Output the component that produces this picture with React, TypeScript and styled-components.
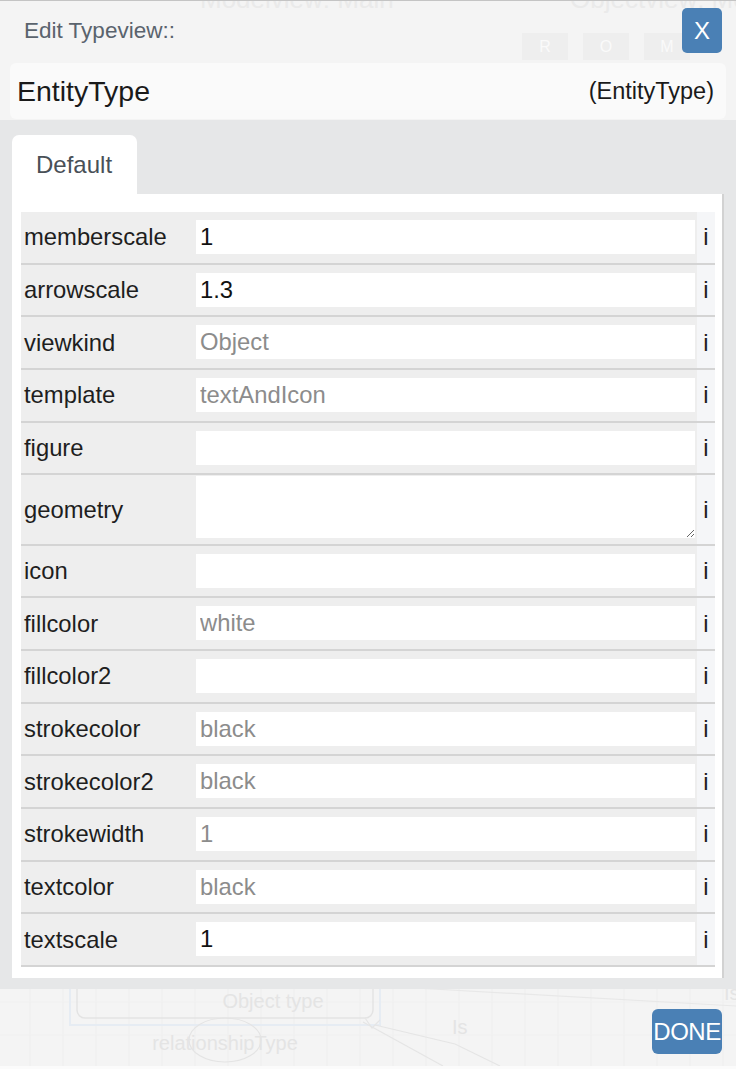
import React from "react";
import styled, { createGlobalStyle } from "styled-components";

const GlobalStyle = createGlobalStyle`
  html, body {
    margin: 0;
    padding: 0;
    width: 736px;
    height: 1069px;
    overflow: hidden;
    background: #f4f4f4;
    font-family: "Liberation Sans", Arial, Helvetica, sans-serif;
  }
  * { box-sizing: border-box; }
`;

const Page = styled.div`
  position: relative;
  width: 736px;
  height: 1069px;
  overflow: hidden;
  background: #f4f4f4;
  border-top: 1px solid #c4c4c4;
`;

/* ---------- faded application behind the dialog ---------- */
const Backdrop = styled.div`
  position: absolute;
  inset: 0;
  pointer-events: none;
`;

const FaintTitle = styled.div<{ $left: number }>`
  position: absolute;
  top: -17px;
  left: ${(p) => p.$left}px;
  font-size: 26px;
  color: #eaeaea;
  white-space: nowrap;
`;

const FaintButtons = styled.div`
  position: absolute;
  top: 32px;
  left: 522px;
  display: flex;
  gap: 15px;
`;

const FaintButton = styled.div`
  width: 46px;
  height: 27px;
  background: #eeeeee;
  color: #fafafa;
  font-size: 16px;
  display: flex;
  align-items: center;
  justify-content: center;
`;

const FaintCanvas = styled.svg`
  position: absolute;
  left: 0;
  bottom: 0;
  width: 736px;
  height: 110px;
`;

/* ---------- dialog ---------- */
const Modal = styled.div`
  position: absolute;
  inset: 0;
  display: flex;
  flex-direction: column;
`;

const Header = styled.div`
  height: 62px;
  display: flex;
  justify-content: space-between;
  align-items: flex-start;
  padding: 0 14px 0 24px;
`;

const Title = styled.div`
  margin-top: 17px;
  font-size: 22.5px;
  line-height: 26px;
  color: #5a636d;
`;

const CloseButton = styled.button`
  margin-top: 7px;
  width: 40px;
  height: 45px;
  border: none;
  border-radius: 5px;
  background: #4a80b5;
  color: #ffffff;
  font-family: inherit;
  font-size: 24px;
  padding: 0;
  display: flex;
  align-items: center;
  justify-content: center;
`;

const NameBar = styled.div`
  margin: 0 10px;
  height: 56px;
  background: #fafafa;
  border-radius: 6px;
  display: flex;
  align-items: center;
  justify-content: space-between;
  padding: 0 12px 0 7px;
`;

const NameMain = styled.div`
  font-size: 28.5px;
  color: #1a1a1a;
`;

const NameType = styled.div`
  font-size: 23.5px;
  color: #1a1a1a;
`;

const Body = styled.div`
  margin-top: 1px;
  background: #e6e7e8;
  padding: 15px 10px 11px 12px;
  display: flex;
  flex-direction: column;
`;

const TabList = styled.div`
  display: flex;
`;

const Tab = styled.div`
  width: 125px;
  height: 59px;
  background: #ffffff;
  border-radius: 7px 7px 0 0;
  padding-left: 24px;
  display: flex;
  align-items: center;
  font-size: 24px;
  color: #495057;
`;

const TabPanel = styled.div`
  width: 712px;
  background: #ffffff;
  border-right: 2px solid #d2d2d2;
  padding: 18px 7px 11px 9px;
`;

const PropTable = styled.div`
  display: flex;
  flex-direction: column;
`;

const Row = styled.div`
  display: flex;
  background: #eeeeee;
  border-bottom: 2px solid #d4d4d4;
`;

const Label = styled.div`
  width: 175px;
  flex: none;
  display: flex;
  align-items: center;
  padding-left: 3px;
  font-size: 23.8px;
  color: #1e1e1e;
`;

const ValueCell = styled.div<{ $multi?: boolean }>`
  flex: 1;
  display: flex;
  padding: ${(p) => (p.$multi ? "0.5px 0 5.7px" : "8px 0 8.7px")};
`;

const TextInput = styled.input`
  width: 100%;
  height: 34px;
  border: none;
  outline: none;
  background: #ffffff;
  padding: 0 4px;
  font-family: inherit;
  font-size: 23.8px;
  color: #111111;
  &::placeholder {
    color: #8c8c8c;
  }
`;

const TextArea = styled.textarea`
  width: 100%;
  height: 62px;
  border: none;
  outline: none;
  background: #ffffff;
  padding: 4px;
  font-family: inherit;
  font-size: 23.8px;
  color: #111111;
  display: block;
`;

const InfoCell = styled.div`
  width: 18px;
  flex: none;
  margin-left: 2px;
  background: #f5f6f8;
  display: flex;
  align-items: center;
  justify-content: center;
  font-size: 23.8px;
  color: #1e1e1e;
`;

const Footer = styled.div`
  flex: 1;
  display: flex;
  justify-content: flex-end;
  align-items: flex-start;
  padding: 20px 14px 0 0;
`;

const DoneButton = styled.button`
  width: 70px;
  height: 45px;
  border: none;
  border-radius: 6px;
  background: #4a80b5;
  color: #ffffff;
  font-family: inherit;
  font-size: 24px;
  padding: 0;
  display: flex;
  align-items: center;
  justify-content: center;
  letter-spacing: -0.5px;
`;

type Prop = {
  label: string;
  value?: string;
  placeholder?: string;
  multiline?: boolean;
};

const props: Prop[] = [
  { label: "memberscale", value: "1" },
  { label: "arrowscale", value: "1.3" },
  { label: "viewkind", placeholder: "Object" },
  { label: "template", placeholder: "textAndIcon" },
  { label: "figure" },
  { label: "geometry", multiline: true },
  { label: "icon" },
  { label: "fillcolor", placeholder: "white" },
  { label: "fillcolor2" },
  { label: "strokecolor", placeholder: "black" },
  { label: "strokecolor2", placeholder: "black" },
  { label: "strokewidth", placeholder: "1" },
  { label: "textcolor", placeholder: "black" },
  { label: "textscale", value: "1" },
];

function BackgroundApp() {
  const gridX = Array.from({ length: 23 }, (_, i) => 30 + i * 33);
  const gridY = Array.from({ length: 4 }, (_, i) => 10 + i * 33);
  return (
    <Backdrop>
      <FaintTitle $left={200}>Modelview: Main</FaintTitle>
      <FaintTitle $left={570}>Objectview: Mo</FaintTitle>
      <FaintButtons>
        <FaintButton>R</FaintButton>
        <FaintButton>O</FaintButton>
        <FaintButton>M</FaintButton>
      </FaintButtons>
      <FaintCanvas viewBox="0 959 736 110">
        {gridX.map((x) => (
          <line key={"gx" + x} x1={x} y1={959} x2={x} y2={1066} stroke="#eeeeee" strokeWidth="1" />
        ))}
        {gridY.map((y) => (
          <line key={"gy" + y} x1={0} y1={959 + y} x2={736} y2={959 + y} stroke="#f0f0f0" strokeWidth="1" />
        ))}
        <rect x="70" y="940" width="310" height="85" fill="none" stroke="#e6ecf3" strokeWidth="2" />
        <rect x="77" y="940" width="296" height="78" rx="8" fill="none" stroke="#e3e3e3" strokeWidth="1.5" />
        <text x="273" y="1008" textAnchor="middle" fontSize="20" fill="#e4e4e4" fontFamily="Liberation Sans, Arial, sans-serif">Object type</text>
        <ellipse cx="225" cy="1040" rx="36" ry="22" fill="none" stroke="#e4e4e4" strokeWidth="1.2" />
        <text x="225" y="1050" textAnchor="middle" fontSize="20" fill="#e4e4e4" fontFamily="Liberation Sans, Arial, sans-serif">relationshipType</text>
        <polyline points="363,1022 443,1066" fill="none" stroke="#e5e5e5" strokeWidth="1.2" />
        <polyline points="375,1025 455,1044 500,1066" fill="none" stroke="#e5e5e5" strokeWidth="1.2" />
        <polyline points="365,1018 372,1028 380,1020" fill="none" stroke="#e5e5e5" strokeWidth="1.2" />
        <polyline points="380,986 736,1006" fill="none" stroke="#e8e8e8" strokeWidth="1.2" />
        <text x="452" y="1034" fontSize="20" fill="#e4e4e4" fontFamily="Liberation Sans, Arial, sans-serif">Is</text>
        <text x="724" y="1000" fontSize="20" fill="#e4e4e4" fontFamily="Liberation Sans, Arial, sans-serif">Is</text>
        <rect x="0" y="1066" width="736" height="3" fill="#fbfbfb" />
      </FaintCanvas>
    </Backdrop>
  );
}

export default function App() {
  return (
    <>
      <GlobalStyle />
      <Page>
        <BackgroundApp />
        <Modal>
          <Header>
            <Title>Edit Typeview::</Title>
            <CloseButton>X</CloseButton>
          </Header>
          <NameBar>
            <NameMain>EntityType</NameMain>
            <NameType>(EntityType)</NameType>
          </NameBar>
          <Body>
            <TabList>
              <Tab>Default</Tab>
            </TabList>
            <TabPanel>
              <PropTable>
                {props.map((p) => (
                  <Row key={p.label}>
                    <Label>{p.label}</Label>
                    <ValueCell $multi={p.multiline}>
                      {p.multiline ? (
                        <TextArea defaultValue={p.value} placeholder={p.placeholder} />
                      ) : (
                        <TextInput defaultValue={p.value} placeholder={p.placeholder} />
                      )}
                    </ValueCell>
                    <InfoCell>i</InfoCell>
                  </Row>
                ))}
              </PropTable>
            </TabPanel>
          </Body>
          <Footer>
            <DoneButton>DONE</DoneButton>
          </Footer>
        </Modal>
      </Page>
    </>
  );
}
